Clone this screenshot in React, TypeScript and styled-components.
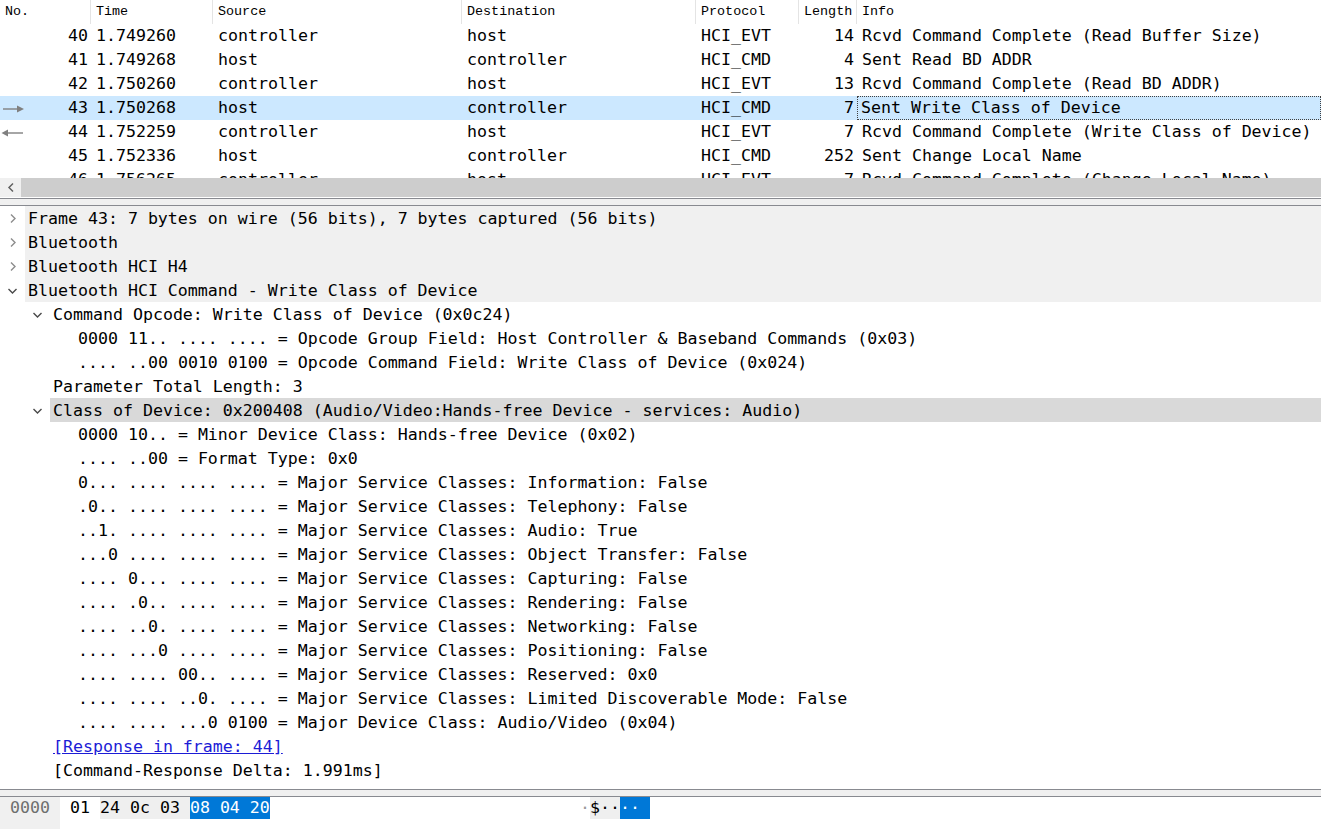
import styled, { createGlobalStyle } from 'styled-components'

const GlobalStyle = createGlobalStyle`
  html, body {
    margin: 0;
    padding: 0;
    background: #fff;
  }
  body {
    font-family: "DejaVu Sans Mono", "Liberation Mono", monospace;
  }
`

const MONO = `"DejaVu Sans Mono", "Liberation Mono", monospace`
const COLS = '91px 122px 249px 234px 103px 58px 1fr'

const Window = styled.div`
  width: 1321px;
  height: 829px;
  display: flex;
  flex-direction: column;
  overflow: hidden;
  background: #fff;
  color: #000;
`

const PacketList = styled.div`
  height: 198px;
  flex-shrink: 0;
  display: flex;
  flex-direction: column;
`

const HeaderRow = styled.div`
  display: grid;
  grid-template-columns: ${COLS};
  height: 24px;
  flex-shrink: 0;
`

const HeaderCell = styled.div<{ $last?: boolean }>`
  font: 13.4px "Liberation Mono", monospace;
  line-height: 24px;
  padding-left: 5px;
  border-right: ${p => (p.$last ? 'none' : '1px solid #e4e4e4')};
  white-space: nowrap;
  overflow: hidden;
`

const Rows = styled.div`
  height: 154px;
  overflow: hidden;
  flex-shrink: 0;
`

const PacketRow = styled.div<{ $selected?: boolean }>`
  display: grid;
  grid-template-columns: ${COLS};
  height: 24px;
  background: ${p => (p.$selected ? '#cce8ff' : 'transparent')};
`

const Cell = styled.div<{ $right?: boolean; $focus?: boolean }>`
  font-family: ${MONO};
  font-size: 16.6px;
  padding: 0 3px 0 5px;
  text-align: ${p => (p.$right ? 'right' : 'left')};
  white-space: nowrap;
  overflow: hidden;
  box-sizing: border-box;
  border: ${p => (p.$focus ? '1px dotted #404040' : 'none')};
  line-height: ${p => (p.$focus ? '22px' : '24px')};
  padding-left: ${p => (p.$focus ? '3px' : '5px')};
`

const NoCell = styled(Cell)`
  display: flex;
  align-items: center;
  justify-content: space-between;
  padding-left: 1px;
`

const HScroll = styled.div`
  height: 19px;
  display: flex;
  flex-shrink: 0;
`

const ScrollButton = styled.div`
  width: 21px;
  background: #f0f0f0;
  display: flex;
  align-items: center;
  justify-content: center;
`

const ScrollThumb = styled.div`
  flex: 1;
  background: #cdcdcd;
`

const Splitter = styled.div`
  height: 8px;
  flex-shrink: 0;
  box-sizing: border-box;
  border-top: 1px solid #888a90;
  border-bottom: 1px solid #888a90;
  background: #f0f0f0;
`

const Details = styled.div`
  flex: 1;
  overflow: hidden;
`

const TreeRow = styled.div`
  display: flex;
  height: 24px;
`

const Indent = styled.div<{ $level: number }>`
  width: ${p => p.$level * 25}px;
  flex-shrink: 0;
`

const Toggle = styled.div`
  width: 25px;
  flex-shrink: 0;
  display: flex;
  align-items: center;
  justify-content: center;
  padding-top: 1px;
  box-sizing: border-box;
`

const Label = styled.div<{ $tone?: 'top' | 'selected' }>`
  flex: 1;
  padding-left: 3px;
  font-family: ${MONO};
  font-size: 16.6px;
  line-height: 26px;
  height: 24px;
  overflow: hidden;
  white-space: nowrap;
  background: ${p =>
    p.$tone === 'top' ? '#f0f0f0' : p.$tone === 'selected' ? '#d9d9d9' : 'transparent'};
`

const Link = styled.span`
  color: #1c1cd6;
  text-decoration: underline;
`

const Bytes = styled.div`
  height: 32px;
  flex-shrink: 0;
  display: flex;
  font-family: ${MONO};
  font-size: 16.6px;
`

const Offset = styled.div`
  width: 60px;
  box-sizing: border-box;
  padding-left: 10px;
  background: #f0f0f0;
  color: #6e6e6e;
  line-height: 22px;
`

const HexCol = styled.div`
  width: 520px;
  box-sizing: border-box;
  padding-left: 10px;
  line-height: 22px;
  white-space: pre;
`

const AsciiCol = styled.div`
  line-height: 22px;
  white-space: pre;
`

const Span = styled.span<{ $kind?: 'field' | 'sel' | 'dim' }>`
  display: inline-block;
  height: 22px;
  background: ${p => (p.$kind === 'field' ? '#efefef' : p.$kind === 'sel' ? '#0078d7' : 'transparent')};
  color: ${p => (p.$kind === 'sel' ? '#fff' : p.$kind === 'dim' ? '#9a9a9a' : '#000')};
`

const Chevron = ({ open }: { open?: boolean }) =>
  open ? (
    <svg width="11" height="8" viewBox="0 0 11 8">
      <polyline points="1.5,2 5.5,6 9.5,2" fill="none" stroke="#4a4a4a" strokeWidth="1.4" />
    </svg>
  ) : (
    <svg width="8" height="11" viewBox="0 0 8 11">
      <polyline points="2,1.5 6,5.5 2,9.5" fill="none" stroke="#8c8c8c" strokeWidth="1.4" />
    </svg>
  )

const Arrow = ({ dir }: { dir: 'in' | 'out' }) => (
  <svg width="23" height="8" viewBox="0 0 23 8">
    {dir === 'out' ? (
      <>
        <line x1="2" y1="4" x2="17" y2="4" stroke="#808080" strokeWidth="1.4" />
        <polygon points="16,0.5 23,4 16,7.5" fill="#808080" />
      </>
    ) : (
      <>
        <line x1="6" y1="4" x2="22" y2="4" stroke="#808080" strokeWidth="1.4" />
        <polygon points="7,0.5 0.5,4 7,7.5" fill="#808080" />
      </>
    )}
  </svg>
)

type Packet = {
  no: number
  time: string
  src: string
  dst: string
  proto: string
  len: number
  info: string
  arrow?: 'in' | 'out'
}

const packets: Packet[] = [
  { no: 40, time: '1.749260', src: 'controller', dst: 'host', proto: 'HCI_EVT', len: 14, info: 'Rcvd Command Complete (Read Buffer Size)' },
  { no: 41, time: '1.749268', src: 'host', dst: 'controller', proto: 'HCI_CMD', len: 4, info: 'Sent Read BD ADDR' },
  { no: 42, time: '1.750260', src: 'controller', dst: 'host', proto: 'HCI_EVT', len: 13, info: 'Rcvd Command Complete (Read BD ADDR)' },
  { no: 43, time: '1.750268', src: 'host', dst: 'controller', proto: 'HCI_CMD', len: 7, info: 'Sent Write Class of Device', arrow: 'out' },
  { no: 44, time: '1.752259', src: 'controller', dst: 'host', proto: 'HCI_EVT', len: 7, info: 'Rcvd Command Complete (Write Class of Device)', arrow: 'in' },
  { no: 45, time: '1.752336', src: 'host', dst: 'controller', proto: 'HCI_CMD', len: 252, info: 'Sent Change Local Name' },
  { no: 46, time: '1.756265', src: 'controller', dst: 'host', proto: 'HCI_EVT', len: 7, info: 'Rcvd Command Complete (Change Local Name)' },
]

const SELECTED = 43

type Node = {
  text: string
  level: number
  toggle?: 'open' | 'closed'
  tone?: 'top' | 'selected'
  link?: boolean
}

const tree: Node[] = [
  { level: 0, toggle: 'closed', tone: 'top', text: 'Frame 43: 7 bytes on wire (56 bits), 7 bytes captured (56 bits)' },
  { level: 0, toggle: 'closed', tone: 'top', text: 'Bluetooth' },
  { level: 0, toggle: 'closed', tone: 'top', text: 'Bluetooth HCI H4' },
  { level: 0, toggle: 'open', tone: 'top', text: 'Bluetooth HCI Command - Write Class of Device' },
  { level: 1, toggle: 'open', text: 'Command Opcode: Write Class of Device (0x0c24)' },
  { level: 2, text: '0000 11.. .... .... = Opcode Group Field: Host Controller & Baseband Commands (0x03)' },
  { level: 2, text: '.... ..00 0010 0100 = Opcode Command Field: Write Class of Device (0x024)' },
  { level: 1, text: 'Parameter Total Length: 3' },
  { level: 1, toggle: 'open', tone: 'selected', text: 'Class of Device: 0x200408 (Audio/Video:Hands-free Device - services: Audio)' },
  { level: 2, text: '0000 10.. = Minor Device Class: Hands-free Device (0x02)' },
  { level: 2, text: '.... ..00 = Format Type: 0x0' },
  { level: 2, text: '0... .... .... .... = Major Service Classes: Information: False' },
  { level: 2, text: '.0.. .... .... .... = Major Service Classes: Telephony: False' },
  { level: 2, text: '..1. .... .... .... = Major Service Classes: Audio: True' },
  { level: 2, text: '...0 .... .... .... = Major Service Classes: Object Transfer: False' },
  { level: 2, text: '.... 0... .... .... = Major Service Classes: Capturing: False' },
  { level: 2, text: '.... .0.. .... .... = Major Service Classes: Rendering: False' },
  { level: 2, text: '.... ..0. .... .... = Major Service Classes: Networking: False' },
  { level: 2, text: '.... ...0 .... .... = Major Service Classes: Positioning: False' },
  { level: 2, text: '.... .... 00.. .... = Major Service Classes: Reserved: 0x0' },
  { level: 2, text: '.... .... ..0. .... = Major Service Classes: Limited Discoverable Mode: False' },
  { level: 2, text: '.... .... ...0 0100 = Major Device Class: Audio/Video (0x04)' },
  { level: 1, link: true, text: '[Response in frame: 44]' },
  { level: 1, text: '[Command-Response Delta: 1.991ms]' },
]

const headers = ['No.', 'Time', 'Source', 'Destination', 'Protocol', 'Length', 'Info']

export default function App() {
  return (
    <Window>
      <GlobalStyle />
      <PacketList>
        <HeaderRow>
          {headers.map((h, i) => (
            <HeaderCell key={h} $last={i === headers.length - 1}>
              {h}
            </HeaderCell>
          ))}
        </HeaderRow>
        <Rows>
          {packets.map(p => {
            const sel = p.no === SELECTED
            return (
              <PacketRow key={p.no} $selected={sel}>
                <NoCell $right>
                  <span>{p.arrow && <Arrow dir={p.arrow} />}</span>
                  <span>{p.no}</span>
                </NoCell>
                <Cell>{p.time}</Cell>
                <Cell>{p.src}</Cell>
                <Cell>{p.dst}</Cell>
                <Cell>{p.proto}</Cell>
                <Cell $right>{p.len}</Cell>
                <Cell $focus={sel}>{p.info}</Cell>
              </PacketRow>
            )
          })}
        </Rows>
        <HScroll>
          <ScrollButton>
            <svg width="8" height="11" viewBox="0 0 8 11">
              <polyline points="6,1.5 2,5.5 6,9.5" fill="none" stroke="#606060" strokeWidth="1.5" />
            </svg>
          </ScrollButton>
          <ScrollThumb />
        </HScroll>
      </PacketList>
      <Splitter />
      <Details>
        {tree.map((n, i) => (
          <TreeRow key={i}>
            <Indent $level={n.level} />
            <Toggle>{n.toggle && <Chevron open={n.toggle === 'open'} />}</Toggle>
            <Label $tone={n.tone}>{n.link ? <Link>{n.text}</Link> : n.text}</Label>
          </TreeRow>
        ))}
      </Details>
      <Splitter />
      <Bytes>
        <Offset>0000</Offset>
        <HexCol>
          <Span>01 </Span>
          <Span $kind="field">24 0c 03 </Span>
          <Span $kind="sel">08 04 20</Span>
        </HexCol>
        <AsciiCol>
          <Span $kind="dim">·</Span>
          <Span $kind="field">$··</Span>
          <Span $kind="sel">·· </Span>
        </AsciiCol>
      </Bytes>
    </Window>
  )
}
